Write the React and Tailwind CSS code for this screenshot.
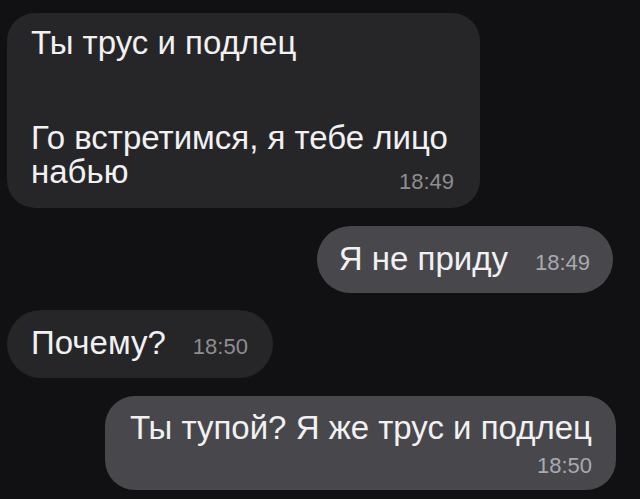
const font = { fontFamily: '"Liberation Sans", Arial, sans-serif' };

const Time = ({ children, light }) => (
  <span
    className={`text-[22px] leading-[14px] whitespace-nowrap ${
      light ? 'text-[#a9a9ae]' : 'text-[#8d8d92]'
    }`}
  >
    {children}
  </span>
);

export default function App() {
  return (
    <div
      className="w-[640px] h-[499px] overflow-hidden bg-[#111113] text-[#f1f1f3] flex flex-col"
      style={font}
    >
      {/* incoming */}
      <div className="self-start ml-[7px] mt-[13px] w-[473px] rounded-[28px] bg-[#262629] pl-[24px] pr-[26px] pt-[13px] pb-[19px] text-[33px] leading-[34px]">
        <div>Ты трус и подлец</div>
        <div className="mt-[61px]">Го встретимся, я тебе лицо</div>
        <div className="flex items-end justify-between">
          <span>набью</span>
          <Time>18:49</Time>
        </div>
      </div>

      {/* outgoing */}
      <div className="self-end mr-[27px] mt-[18px] h-[67px] rounded-full bg-[#48484c] pl-[22px] pr-[23px] pt-[16px] flex items-end gap-[27px] text-[33px] leading-[34px]">
        <span className="pb-[17px]">Я не приду</span>
        <span className="pb-[17px]">
          <Time light>18:49</Time>
        </span>
      </div>

      {/* incoming */}
      <div className="self-start ml-[7px] mt-[17px] h-[68px] rounded-full bg-[#262629] pl-[24px] pr-[25px] pt-[16px] flex items-end gap-[27px] text-[33px] leading-[34px]">
        <span className="pb-[18px]">Почему?</span>
        <span className="pb-[18px]">
          <Time>18:50</Time>
        </span>
      </div>

      {/* outgoing */}
      <div className="self-end mr-[24px] mt-[18px] rounded-[30px] bg-[#48484c] pl-[25px] pr-[24px] pt-[15px] pb-[14px] flex flex-col items-end">
        <div className="text-[33px] leading-[34px]">Ты тупой? Я же трус и подлец</div>
        <div className="mt-[10px] text-[22px] leading-[21px] text-[#a9a9ae]">18:50</div>
      </div>
    </div>
  );
}
